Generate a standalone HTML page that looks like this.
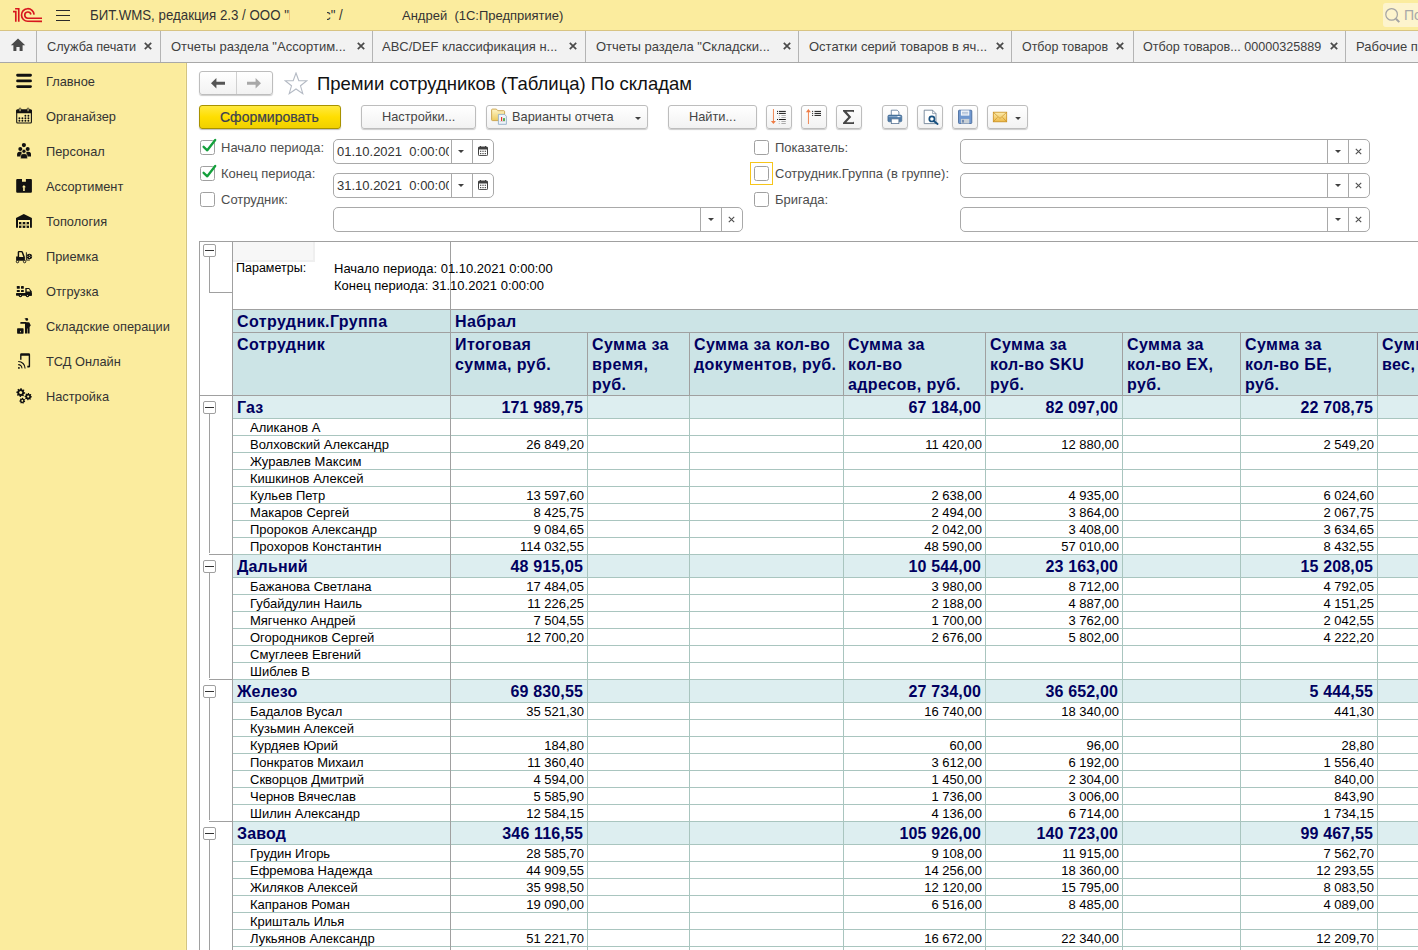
<!DOCTYPE html>
<html><head><meta charset="utf-8">
<style>
*{box-sizing:border-box;margin:0;padding:0}
html,body{width:1418px;height:950px;overflow:hidden;background:#fff;font-family:"Liberation Sans",sans-serif;color:#333}
body{position:relative}
.a{position:absolute}
.t{white-space:nowrap;position:absolute;line-height:1}
.sep{position:absolute;top:31px;width:1px;height:31px;background:#B4B4B4}
.tab{position:absolute;top:40px;font-size:13px;color:#404040;white-space:nowrap;line-height:1;transform:scaleY(1.05);transform-origin:0 11px}
.si{position:absolute;left:46px;font-size:12.8px;color:#333;white-space:nowrap;line-height:1;transform:scaleY(1.05);transform-origin:0 11px}
.btn{position:absolute;border:1px solid #BDBDBD;border-radius:3px;background:linear-gradient(#FFFFFF,#F2F2F2);box-shadow:0 1px 1px rgba(0,0,0,.20)}
.fld{position:absolute;border:1px solid #A9A9A9;border-radius:5px;background:#fff;height:25px}
.dv{position:absolute;top:0;width:1px;height:23px;background:#A9A9A9}
.cb{position:absolute;width:15px;height:15px;border:1px solid #A0A0A0;border-radius:2.5px;background:#fff}
.lbl{position:absolute;font-size:13px;color:#4D4D4D;white-space:nowrap;line-height:1;transform:scaleY(1.05);transform-origin:0 11px}
.hl{position:absolute;height:1px}
.vl{position:absolute;width:1px}
.hd{position:absolute;font-size:16px;font-weight:bold;color:#000060;letter-spacing:0.4px;line-height:20px;white-space:nowrap}
.g{position:absolute;font-size:16px;font-weight:bold;color:#000060;letter-spacing:0.15px;white-space:nowrap;line-height:1}
.n{position:absolute;font-size:13px;color:#000;white-space:nowrap;line-height:1;transform:scaleY(1.05);transform-origin:0 11px}
.sy{transform:scaleY(1.05);transform-origin:0 11px}
.r{text-align:right}
</style></head><body>

<div class="a" style="left:0;top:0;width:1418px;height:30px;background:#FBEC9E"></div>
<div class="a" style="left:0;top:30px;width:1418px;height:1px;background:#D8C483"></div>
<svg class="a" style="left:10px;top:4px" width="36" height="22" viewBox="0 0 36 22">
<g fill="none" stroke="#D7161E" stroke-width="1.65" stroke-linecap="butt">
<path d="M3 7.6 H5.8 V17.8"/>
<path d="M5.1 4.7 H8.75 V17.8"/>
<path d="M24.1 10.6 A6.3 6.3 0 1 0 17.8 17.3 H32"/>
<path d="M20.9 10.5 A3.1 3.1 0 1 0 17.8 14.2 H32"/>
</g></svg>
<div class="a" style="left:56px;top:10px;width:14px;height:1px;background:#2A2A2A"></div>
<div class="a" style="left:56px;top:15px;width:14px;height:1px;background:#2A2A2A"></div>
<div class="a" style="left:56px;top:20px;width:14px;height:1px;background:#2A2A2A"></div>
<div class="t sy" style="left:90px;top:9px;font-size:13.3px;color:#333">БИТ.WMS, редакция 2.3 / ООО "</div>
<div class="a" style="left:289px;top:10px;width:1px;height:10px;background:#F2C27A"></div>
<div class="a" style="left:327px;top:0;width:30px;height:30px;overflow:hidden"><div class="t sy" style="left:-3px;top:9px;font-size:13.3px;color:#333">с" /</div></div>
<div class="t sy" style="left:402px;top:9px;font-size:13px;color:#333">Андрей&nbsp; (1С:Предприятие)</div>
<div class="a" style="left:1383px;top:3px;width:40px;height:24px;background:#FDF4CD;border-radius:3px"></div>
<svg class="a" style="left:1383px;top:4px" width="20" height="22" viewBox="0 0 20 22"><circle cx="8.6" cy="10.4" r="5.8" fill="none" stroke="#A3A3A3" stroke-width="1.2"/><path d="M12.9 14.7 L16.3 18.1" stroke="#A3A3A3" stroke-width="2"/></svg>
<div class="t" style="left:1404px;top:8px;font-size:14px;color:#A8A8A8">По</div>
<div class="a" style="left:0;top:31px;width:1418px;height:31px;background:#F2F2F2"></div>
<div class="a" style="left:0;top:62px;width:1418px;height:1px;background:#A8A8A8"></div>
<svg class="a" style="left:10px;top:38px" width="16" height="14" viewBox="0 0 16 14"><path d="M8 0.5 L15.2 7.3 H12.6 V13 H9.6 V9 H6.4 V13 H3.4 V7.3 H0.8 Z" fill="#4A4A4A"/></svg>
<div class="sep" style="left:36px"></div>
<div class="sep" style="left:160px"></div>
<div class="sep" style="left:372px"></div>
<div class="sep" style="left:585px"></div>
<div class="sep" style="left:798px"></div>
<div class="sep" style="left:1011px"></div>
<div class="sep" style="left:1133px"></div>
<div class="sep" style="left:1345px"></div>
<div class="tab" style="left:47px;font-size:12.7px;top:41px">Служба печати</div>
<svg class="a" style="left:144px;top:42px" width="8" height="8" viewBox="0 0 8 8"><path d="M0.8 0.8 L7.2 7.2 M7.2 0.8 L0.8 7.2" stroke="#4A4A4A" stroke-width="1.7"/></svg>
<div class="tab" style="left:171px;font-size:13px;top:40px">Отчеты раздела "Ассортим...</div>
<svg class="a" style="left:357px;top:42px" width="8" height="8" viewBox="0 0 8 8"><path d="M0.8 0.8 L7.2 7.2 M7.2 0.8 L0.8 7.2" stroke="#4A4A4A" stroke-width="1.7"/></svg>
<div class="tab" style="left:382px;font-size:13px;top:40px">ABC/DEF классификация н...</div>
<svg class="a" style="left:569px;top:42px" width="8" height="8" viewBox="0 0 8 8"><path d="M0.8 0.8 L7.2 7.2 M7.2 0.8 L0.8 7.2" stroke="#4A4A4A" stroke-width="1.7"/></svg>
<div class="tab" style="left:596px;font-size:13px;top:40px">Отчеты раздела "Складски...</div>
<svg class="a" style="left:783px;top:42px" width="8" height="8" viewBox="0 0 8 8"><path d="M0.8 0.8 L7.2 7.2 M7.2 0.8 L0.8 7.2" stroke="#4A4A4A" stroke-width="1.7"/></svg>
<div class="tab" style="left:809px;font-size:13px;top:40px">Остатки серий товаров в яч...</div>
<svg class="a" style="left:996px;top:42px" width="8" height="8" viewBox="0 0 8 8"><path d="M0.8 0.8 L7.2 7.2 M7.2 0.8 L0.8 7.2" stroke="#4A4A4A" stroke-width="1.7"/></svg>
<div class="tab" style="left:1022px;font-size:12.45px;top:41px">Отбор товаров</div>
<svg class="a" style="left:1116px;top:42px" width="8" height="8" viewBox="0 0 8 8"><path d="M0.8 0.8 L7.2 7.2 M7.2 0.8 L0.8 7.2" stroke="#4A4A4A" stroke-width="1.7"/></svg>
<div class="tab" style="left:1143px;font-size:12.6px;top:41px">Отбор товаров... 00000325889</div>
<svg class="a" style="left:1330px;top:42px" width="8" height="8" viewBox="0 0 8 8"><path d="M0.8 0.8 L7.2 7.2 M7.2 0.8 L0.8 7.2" stroke="#4A4A4A" stroke-width="1.7"/></svg>
<div class="tab" style="left:1356px;font-size:13px;top:40px">Рабочие пр</div>
<div class="a" style="left:0;top:63px;width:186px;height:887px;background:#FBEC9E"></div>
<div class="a" style="left:185px;top:63px;width:1px;height:887px;background:#FDEFA2"></div>
<div class="a" style="left:186px;top:63px;width:1px;height:887px;background:#D3C482"></div>
<svg class="a" style="left:12px;top:70px" width="24" height="22" viewBox="0 0 24 22"><path d="M5.6 5.2 H18.5 M5.6 10.9 H18.5 M5.6 16.6 H18.5" stroke="#111" stroke-width="2.9" stroke-linecap="round"/></svg>
<div class="si" style="top:76px">Главное</div>
<svg class="a" style="left:12px;top:105px" width="24" height="22" viewBox="0 0 24 22"><rect x="4.7" y="5.1" width="14.7" height="12.9" rx="1" fill="none" stroke="#111" stroke-width="1.1"/><rect x="4.2" y="4.6" width="15.7" height="3.6" rx="1" fill="#111"/><rect x="7.2" y="3" width="1.7" height="3.6" rx="0.8" fill="#FBEC9E" stroke="#111" stroke-width="0.7"/><rect x="15.2" y="3" width="1.7" height="3.6" rx="0.8" fill="#FBEC9E" stroke="#111" stroke-width="0.7"/><g fill="#111"><circle cx="13.4" cy="10.7" r="0.95"/><circle cx="16.4" cy="10.7" r="0.95"/><circle cx="7.4" cy="13.3" r="0.95"/><circle cx="10.4" cy="13.3" r="0.95"/><circle cx="13.4" cy="13.3" r="0.95"/><circle cx="16.4" cy="13.3" r="0.95"/><circle cx="7.4" cy="15.8" r="0.95"/><circle cx="10.4" cy="15.8" r="0.95"/><circle cx="13.4" cy="15.8" r="0.95"/><circle cx="16.4" cy="15.8" r="0.95"/></g></svg>
<div class="si" style="top:111px">Органайзер</div>
<svg class="a" style="left:12px;top:140px" width="24" height="22" viewBox="0 0 24 22"><g fill="#111"><circle cx="11.9" cy="5.1" r="2.1"/><circle cx="8.3" cy="9.1" r="2"/><circle cx="15.7" cy="9.1" r="2"/><path d="M5.1 16.6 V14.3 Q5.1 11.8 7.6 11.8 H9.6 V16.6 Z"/><path d="M19 16.6 V14.3 Q19 11.8 16.5 11.8 H14.4 V16.6 Z"/></g><g fill="#111" stroke="#FBEC9E" stroke-width="0.55"><circle cx="11.95" cy="11.3" r="2"/><path d="M8.6 18.7 V16.1 Q8.6 13.7 11 13.7 H12.9 Q15.4 13.7 15.4 16.1 V18.7 Z"/></g></svg>
<div class="si" style="top:146px">Персонал</div>
<svg class="a" style="left:12px;top:175px" width="24" height="22" viewBox="0 0 24 22"><path d="M4.2 4.9 Q4.2 3.9 5.2 3.9 H10 V6.7 H13.9 V3.9 H18.9 Q19.9 3.9 19.9 4.9 V16.8 Q19.9 17.8 18.9 17.8 H5.2 Q4.2 17.8 4.2 16.8 Z" fill="#111"/><path d="M11.95 10.1 L13.9 12.3 H12.75 V16 H11.15 V12.3 H10 Z" fill="#FBEC9E"/></svg>
<div class="si" style="top:181px">Ассортимент</div>
<svg class="a" style="left:12px;top:210px" width="24" height="22" viewBox="0 0 24 22"><path d="M4 8.1 L11.8 3.9 L19.9 8.1 V17.8 H18 V10 H6 V17.8 H4 Z" fill="#111"/><rect x="7" y="12" width="10" height="6" fill="#111" opacity="0.22"/><g fill="#111"><rect x="7" y="12" width="2.2" height="2.1"/><rect x="10.9" y="12" width="2.2" height="2.1"/><rect x="14.8" y="12" width="2.2" height="2.1"/><rect x="7" y="15.8" width="2.2" height="2.1"/><rect x="10.9" y="15.8" width="2.2" height="2.1"/><rect x="14.8" y="15.8" width="2.2" height="2.1"/></g></svg>
<div class="si" style="top:216px">Топология</div>
<svg class="a" style="left:12px;top:245px" width="24" height="22" viewBox="0 0 24 22"><g transform="translate(0,1)"><path d="M5.7 10.5 V6.3 Q5.7 5 7 5 H9.6 Q10.6 5 11.1 6.2 L12.9 11 V14.7 H4.1 V10.5 Z" fill="#111"/><path d="M7.1 10.9 V6.3 H9.5 L11.3 10.9 Z" fill="#FBEC9E"/><circle cx="5.5" cy="15.6" r="1.2" fill="#FBEC9E" stroke="#111" stroke-width="0.9"/><circle cx="12.6" cy="15.6" r="1.2" fill="#FBEC9E" stroke="#111" stroke-width="0.9"/><rect x="13.9" y="6.3" width="0.9" height="8.2" fill="#111"/><rect x="14.8" y="13.6" width="3" height="0.9" fill="#111"/><circle cx="17.4" cy="10.5" r="2.7" fill="#111"/><g fill="#FBEC9E"><circle cx="17.4" cy="9.2" r="0.55"/><circle cx="17.4" cy="11.4" r="0.55"/><circle cx="15.8" cy="10.3" r="0.5"/><circle cx="19" cy="10.3" r="0.5"/></g></g></svg>
<div class="si" style="top:251px">Приемка</div>
<svg class="a" style="left:12px;top:280px" width="24" height="22" viewBox="0 0 24 22"><g transform="translate(0,1)"><g fill="#111"><rect x="4.8" y="5" width="3" height="2.8" rx="0.6"/><rect x="9" y="5" width="2.8" height="2.8" rx="0.6"/><rect x="4.8" y="9" width="3" height="2" rx="0.5"/><rect x="9" y="9" width="2.8" height="2" rx="0.5"/><rect x="4" y="12" width="15.8" height="2.7" rx="0.6"/><path d="M13.3 7 H17.2 L19.8 10.5 V14.7 H13.3 Z"/><circle cx="8.4" cy="14.5" r="1.8"/><circle cx="15.5" cy="14.5" r="1.8"/></g><path d="M14.7 8 H17 L18.2 10.5 H14.7 Z" fill="#FBEC9E"/><circle cx="8.4" cy="14.5" r="0.55" fill="#FBEC9E"/><circle cx="15.5" cy="14.5" r="0.55" fill="#FBEC9E"/></g></svg>
<div class="si" style="top:286px">Отгрузка</div>
<svg class="a" style="left:12px;top:315px" width="24" height="22" viewBox="0 0 24 22"><g fill="#111"><rect x="5.1" y="13.2" width="6.5" height="5.6" rx="0.7"/><circle cx="14.8" cy="4.4" r="1.35"/><path d="M12.2 3.1 L14.5 3.6 L14.2 4.4 Z"/><rect x="8.3" y="7" width="6" height="1.8" rx="0.6"/><path d="M13 7.2 H16.6 Q18 7.4 18 9 L18.8 10.2 L17.6 12 V18.6 H15.6 V13.5 H15.1 V18.6 H13 Z"/></g><ellipse cx="8.4" cy="16.5" rx="0.45" ry="0.85" fill="#FBEC9E"/></svg>
<div class="si" style="top:321px">Складские операции</div>
<svg class="a" style="left:12px;top:350px" width="24" height="22" viewBox="0 0 24 22"><g fill="#111"><path d="M8.1 9.7 V4.4 Q8.1 3.2 9.3 3.2 H16.9 Q18.1 3.2 18.1 4.4 V16.5 Q18.1 17.6 17 17.6 H15.3 V15.7 H16.7 V5.8 H9.5 V9.7 Z"/><circle cx="6.9" cy="17.9" r="0.95"/></g><g fill="none" stroke="#111" stroke-width="1.1"><path d="M6.2 14.6 A3.6 3.6 0 0 1 9.9 18.4"/><path d="M6.2 11.5 A6.8 6.8 0 0 1 13.1 18.4"/></g></svg>
<div class="si" style="top:356px">ТСД Онлайн</div>
<svg class="a" style="left:12px;top:385px" width="24" height="22" viewBox="0 0 24 22"><polygon points="8.70,3.10 9.58,3.19 10.00,4.46 10.59,4.77 11.88,4.42 12.44,5.10 11.84,6.30 12.03,6.94 13.20,7.60 13.11,8.48 11.84,8.90 11.53,9.49 11.88,10.78 11.20,11.34 10.00,10.74 9.36,10.93 8.70,12.10 7.82,12.01 7.40,10.74 6.81,10.43 5.52,10.78 4.96,10.10 5.56,8.90 5.37,8.26 4.20,7.60 4.29,6.72 5.56,6.30 5.87,5.71 5.52,4.42 6.20,3.86 7.40,4.46 8.04,4.27" fill="#111"/><circle cx="8.7" cy="7.6" r="1.5" fill="#FBEC9E"/><polygon points="16.20,7.90 16.92,7.97 17.27,9.01 17.76,9.27 18.82,8.98 19.28,9.54 18.79,10.53 18.95,11.05 19.90,11.60 19.83,12.32 18.79,12.67 18.53,13.16 18.82,14.22 18.26,14.68 17.27,14.19 16.75,14.35 16.20,15.30 15.48,15.23 15.13,14.19 14.64,13.93 13.58,14.22 13.12,13.66 13.61,12.67 13.45,12.15 12.50,11.60 12.57,10.88 13.61,10.53 13.87,10.04 13.58,8.98 14.14,8.52 15.13,9.01 15.65,8.85" fill="#111"/><circle cx="16.2" cy="11.6" r="1.1" fill="#FBEC9E"/><polygon points="10.30,12.75 10.97,12.83 11.30,13.68 11.73,13.95 12.65,13.88 13.00,14.45 12.54,15.24 12.60,15.75 13.22,16.42 13.00,17.05 12.10,17.18 11.73,17.55 11.60,18.45 10.97,18.67 10.30,18.05 9.79,17.99 9.00,18.45 8.43,18.10 8.50,17.18 8.23,16.75 7.38,16.42 7.30,15.75 8.06,15.24 8.23,14.75 7.95,13.88 8.43,13.40 9.30,13.68 9.79,13.51" fill="#111"/><circle cx="10.3" cy="15.75" r="0.9" fill="#FBEC9E"/></svg>
<div class="si" style="top:391px">Настройка</div>
<div class="btn" style="left:199px;top:71px;width:74px;height:24px"></div>
<div class="a" style="left:236px;top:72px;width:1px;height:22px;background:#D0D0D0"></div>
<svg class="a" style="left:211px;top:78px" width="14" height="11" viewBox="0 0 14 11"><path d="M0 5.25 L5.4 0 V3.7 H14 V6.8 H5.4 V10.5 Z" fill="#555"/></svg>
<svg class="a" style="left:247px;top:78px" width="14" height="11" viewBox="0 0 14 11"><path d="M14 5.25 L8.6 0 V3.7 H0 V6.8 H8.6 V10.5 Z" fill="#A8A8A8"/></svg>
<svg class="a" style="left:283.5px;top:71.5px" width="24" height="23" viewBox="0 0 24 23"><path d="M12 1 L14.8 8.6 L22.8 8.8 L16.5 13.8 L18.8 21.6 L12 17 L5.2 21.6 L7.5 13.8 L1.2 8.8 L9.2 8.6 Z" fill="none" stroke="#B4BAC4" stroke-width="1.1"/></svg>
<div class="t" style="left:317px;top:75px;font-size:18.5px;color:#111">Премии сотрудников (Таблица) По складам</div>
<div class="a" style="left:199px;top:105px;width:142px;height:24px;border:1px solid #A89200;border-radius:3px;background:linear-gradient(#FFE940,#FFDE00 50%,#F0D000);box-shadow:0 1px 1px rgba(0,0,0,.25)"></div>
<div class="t" style="left:220px;top:110px;font-size:14px;color:#3C4150;-webkit-text-stroke:0.2px #3C4150;transform:scaleY(1.05);transform-origin:0 12px">Сформировать</div>
<div class="btn" style="left:361px;top:105px;width:115px;height:24px"></div>
<div class="t sy" style="left:382px;top:111px;font-size:12.8px;color:#444">Настройки...</div>
<div class="btn" style="left:486px;top:105px;width:162px;height:24px"></div>
<svg class="a" style="left:484px;top:102px" width="26" height="26" viewBox="0 0 26 26"><defs><linearGradient id="fg" x1="0" y1="0" x2="0" y2="1"><stop offset="0" stop-color="#FFF6C8"/><stop offset="1" stop-color="#EDCB5E"/></linearGradient></defs><path d="M7.6 8 Q7.6 7.1 8.5 7.1 H12.4 L13.8 8.7 H19.8 Q20.6 8.7 20.6 9.6 V17.8 Q20.6 18.6 19.8 18.6 H8.5 Q7.6 18.6 7.6 17.8 Z" fill="url(#fg)" stroke="#C9A24A" stroke-width="0.9"/><path d="M14.4 12.4 H20.6 L22.4 14.2 V22.3 H14.4 Z" fill="#EEF4FA" stroke="#93AFC6" stroke-width="0.9"/><rect x="17" y="15" width="1.2" height="4" fill="#E8392A"/><rect x="19.1" y="16.1" width="1.8" height="2.9" fill="#45A845"/><path d="M15.8 19.4 H21" stroke="#C9B0B0" stroke-width="0.5"/></svg>
<div class="t sy" style="left:512px;top:111px;font-size:12.8px;color:#444">Варианты отчета</div>
<svg class="a" style="left:635px;top:117px" width="6" height="3" viewBox="0 0 6 3"><path d="M0 0 H6 L3 3 Z" fill="#404040"/></svg>
<div class="btn" style="left:668px;top:105px;width:89px;height:24px"></div>
<div class="t sy" style="left:689px;top:111px;font-size:12.8px;color:#444">Найти...</div>
<div class="btn" style="left:766px;top:105px;width:26px;height:24px"></div>
<div class="btn" style="left:801px;top:105px;width:26px;height:24px"></div>
<div class="btn" style="left:836px;top:105px;width:26px;height:24px"></div>
<div class="btn" style="left:882px;top:105px;width:26px;height:24px"></div>
<div class="btn" style="left:917px;top:105px;width:26px;height:24px"></div>
<div class="btn" style="left:952px;top:105px;width:26px;height:24px"></div>
<div class="btn" style="left:987px;top:105px;width:41px;height:24px"></div>
<svg class="a" style="left:762px;top:102px" width="104" height="30" viewBox="0 0 104 30">
<g fill="#EE7C44"><rect x="10.95" y="7" width="0.9" height="12.5"/><path d="M8.9 18.9 H13.9 L11.4 22 Z"/>
<rect x="45.95" y="9.5" width="0.9" height="12.5"/><path d="M43.9 10.3 H48.9 L46.4 7 Z"/></g>
<g fill="#1A1A1A"><rect x="15" y="8.9" width="1" height="1"/><rect x="16.9" y="8.9" width="6.9" height="1"/><rect x="15" y="10.9" width="1" height="1"/><rect x="16.9" y="10.9" width="6.9" height="1"/><rect x="15" y="17" width="1" height="1"/><rect x="16.9" y="17" width="6.9" height="1"/>
<rect x="50.1" y="8.9" width="1" height="1"/><rect x="52.5" y="8.9" width="6.5" height="1"/><rect x="50.1" y="10.9" width="1" height="1"/><rect x="52.5" y="10.9" width="6.5" height="1"/><rect x="50.1" y="12.9" width="1" height="1"/><rect x="52.5" y="12.9" width="6.5" height="1"/></g>
<g fill="#9A9A9A"><rect x="16.8" y="13" width="0.8" height="0.8"/><rect x="19.4" y="13" width="4.4" height="0.8"/><rect x="16.8" y="15" width="0.8" height="0.8"/><rect x="19.4" y="15" width="4.4" height="0.8"/><rect x="16.8" y="19" width="0.8" height="0.8"/><rect x="19.4" y="19" width="4.4" height="0.8"/><rect x="16.8" y="21" width="0.8" height="0.8"/><rect x="19.4" y="21" width="4.4" height="0.8"/></g>
<path d="M81 8 H92 V10.6 L91.2 9.8 H84.6 L89.2 15 L84.4 20.3 H91.2 L92 19.5 V22 H81 V20.8 L86.3 15 L81 9.2 Z" fill="#454545"/>
</svg>
<svg class="a" style="left:878px;top:102px" width="104" height="30" viewBox="0 0 104 30">
<path d="M13.3 8.2 H19.2 L20.9 9.9 V13.6 H13.3 Z" fill="#fff" stroke="#5A7595" stroke-width="0.8"/>
<rect x="9.9" y="13.1" width="13.9" height="6.7" rx="1.3" fill="#4F7BA8" stroke="#385F88" stroke-width="0.6"/>
<rect x="10.6" y="14.3" width="12.5" height="0.8" fill="#9DB8D6"/>
<rect x="19.5" y="14.1" width="2.2" height="1" fill="#fff"/>
<rect x="13.3" y="16.9" width="7.6" height="4.7" fill="#fff" stroke="#5A7595" stroke-width="0.8"/>
<path d="M46.2 8.2 H54.6 L58 11.6 V21.6 H46.2 Z" fill="#fff" stroke="#61758C" stroke-width="0.8"/>
<path d="M54.6 8.2 V11.6 H58" fill="none" stroke="#61758C" stroke-width="0.6"/>
<circle cx="53.9" cy="16.9" r="2.6" fill="#fff" stroke="#17507F" stroke-width="1.7"/>
<path d="M55.8 18.9 L59.6 22" stroke="#17507F" stroke-width="1.9" stroke-linecap="round"/>
<rect x="80.5" y="8.2" width="13.3" height="13.3" rx="0.8" fill="#6F97CF" stroke="#3E6296" stroke-width="0.8"/>
<rect x="82.9" y="8.4" width="8.4" height="5.2" fill="#F4F7FB"/>
<rect x="84" y="9.9" width="6.2" height="0.6" fill="#7D98BD"/><rect x="84" y="11.6" width="6.2" height="0.6" fill="#7D98BD"/>
<rect x="82.9" y="16.9" width="8.4" height="4.6" fill="#C9D0D6"/>
<rect x="84.4" y="17.8" width="1.2" height="2.8" fill="#3E6296"/>
</svg>
<svg class="a" style="left:982px;top:102px" width="52" height="30" viewBox="0 0 52 30"><defs><linearGradient id="mg" x1="0" y1="0" x2="0" y2="1"><stop offset="0" stop-color="#FCEDB0"/><stop offset="1" stop-color="#EDB947"/></linearGradient></defs>
<rect x="11.3" y="10.2" width="13.4" height="9.6" fill="url(#mg)" stroke="#C98E1C" stroke-width="0.8"/>
<path d="M11.8 10.8 L18 16.4 L24.2 10.8 M11.8 19.3 L15.6 15.2 M24.2 19.3 L20.4 15.2" fill="none" stroke="#CC9428" stroke-width="0.7"/>
<path d="M33.2 14.9 H38.9 L36.05 18 Z" fill="#404040"/></svg>
<div class="cb" style="left:200px;top:140px"></div>
<svg class="a" style="left:200px;top:138px" width="18" height="18" viewBox="0 0 18 18"><path d="M3.6 8.8 L7.3 12.3 L15.2 2" fill="none" stroke="#14A03C" stroke-width="2.3" stroke-linecap="round" stroke-linejoin="round"/></svg>
<div class="cb" style="left:200px;top:166px"></div>
<svg class="a" style="left:200px;top:164px" width="18" height="18" viewBox="0 0 18 18"><path d="M3.6 8.8 L7.3 12.3 L15.2 2" fill="none" stroke="#14A03C" stroke-width="2.3" stroke-linecap="round" stroke-linejoin="round"/></svg>
<div class="cb" style="left:200px;top:192px"></div>
<div class="lbl" style="left:221px;top:141px">Начало периода:</div>
<div class="lbl" style="left:221px;top:167px">Конец периода:</div>
<div class="lbl" style="left:221px;top:193px">Сотрудник:</div>
<div class="fld" style="left:333px;top:139px;width:161px;overflow:hidden">
<div class="t sy" style="left:3px;top:5px;font-size:13px;color:#333;width:112px;overflow:hidden">01.10.2021&nbsp; 0:00:00</div>
<div class="dv" style="left:117px"></div><div class="dv" style="left:138px"></div></div>
<svg class="a" style="left:458px;top:150px" width="6" height="3" viewBox="0 0 6 3"><path d="M0 0 H6 L3 3 Z" fill="#404040"/></svg>
<svg class="a" style="left:478px;top:146px" width="10" height="10" viewBox="0 0 10 10"><rect x="0.5" y="1" width="9" height="8.6" rx="0.8" fill="#fff" stroke="#404040" stroke-width="1"/><rect x="0.5" y="1" width="9" height="2.5" fill="#404040"/><rect x="2" y="0" width="1" height="1.5" fill="#404040"/><rect x="7" y="0" width="1" height="1.5" fill="#404040"/><g fill="#505050"><rect x="2" y="4.7" width="1.3" height="1.2"/><rect x="4.35" y="4.7" width="1.3" height="1.2"/><rect x="6.7" y="4.7" width="1.3" height="1.2"/><rect x="2" y="7" width="1.3" height="1.2"/><rect x="4.35" y="7" width="1.3" height="1.2"/><rect x="6.7" y="7" width="1.3" height="1.2"/></g></svg>
<div class="fld" style="left:333px;top:173px;width:161px;overflow:hidden">
<div class="t sy" style="left:3px;top:5px;font-size:13px;color:#333;width:112px;overflow:hidden">31.10.2021&nbsp; 0:00:00</div>
<div class="dv" style="left:117px"></div><div class="dv" style="left:138px"></div></div>
<svg class="a" style="left:458px;top:184px" width="6" height="3" viewBox="0 0 6 3"><path d="M0 0 H6 L3 3 Z" fill="#404040"/></svg>
<svg class="a" style="left:478px;top:180px" width="10" height="10" viewBox="0 0 10 10"><rect x="0.5" y="1" width="9" height="8.6" rx="0.8" fill="#fff" stroke="#404040" stroke-width="1"/><rect x="0.5" y="1" width="9" height="2.5" fill="#404040"/><rect x="2" y="0" width="1" height="1.5" fill="#404040"/><rect x="7" y="0" width="1" height="1.5" fill="#404040"/><g fill="#505050"><rect x="2" y="4.7" width="1.3" height="1.2"/><rect x="4.35" y="4.7" width="1.3" height="1.2"/><rect x="6.7" y="4.7" width="1.3" height="1.2"/><rect x="2" y="7" width="1.3" height="1.2"/><rect x="4.35" y="7" width="1.3" height="1.2"/><rect x="6.7" y="7" width="1.3" height="1.2"/></g></svg>
<div class="fld" style="left:333px;top:207px;width:410px"><div class="dv" style="left:366px"></div><div class="dv" style="left:387px"></div></div>
<svg class="a" style="left:708px;top:218px" width="6" height="3" viewBox="0 0 6 3"><path d="M0 0 H6 L3 3 Z" fill="#404040"/></svg>
<svg class="a" style="left:728px;top:216px" width="7" height="7" viewBox="0 0 7 7"><path d="M0.8 0.8 L6.2 6.2 M6.2 0.8 L0.8 6.2" stroke="#505050" stroke-width="1.15"/></svg>
<div class="cb" style="left:754px;top:140px"></div>
<div class="cb" style="left:754px;top:166px"></div>
<div class="cb" style="left:754px;top:192px"></div>
<div class="a" style="left:750px;top:162px;width:23px;height:23px;border:1px solid #F6C51A"></div>
<div class="lbl" style="left:775px;top:141px">Показатель:</div>
<div class="lbl" style="left:775px;top:167px">Сотрудник.Группа (в группе):</div>
<div class="lbl" style="left:775px;top:193px">Бригада:</div>
<div class="fld" style="left:960px;top:139px;width:410px"><div class="dv" style="left:366px"></div><div class="dv" style="left:387px"></div></div>
<svg class="a" style="left:1335px;top:150px" width="6" height="3" viewBox="0 0 6 3"><path d="M0 0 H6 L3 3 Z" fill="#404040"/></svg>
<svg class="a" style="left:1355px;top:148px" width="7" height="7" viewBox="0 0 7 7"><path d="M0.8 0.8 L6.2 6.2 M6.2 0.8 L0.8 6.2" stroke="#505050" stroke-width="1.15"/></svg>
<div class="fld" style="left:960px;top:173px;width:410px"><div class="dv" style="left:366px"></div><div class="dv" style="left:387px"></div></div>
<svg class="a" style="left:1335px;top:184px" width="6" height="3" viewBox="0 0 6 3"><path d="M0 0 H6 L3 3 Z" fill="#404040"/></svg>
<svg class="a" style="left:1355px;top:182px" width="7" height="7" viewBox="0 0 7 7"><path d="M0.8 0.8 L6.2 6.2 M6.2 0.8 L0.8 6.2" stroke="#505050" stroke-width="1.15"/></svg>
<div class="fld" style="left:960px;top:207px;width:410px"><div class="dv" style="left:366px"></div><div class="dv" style="left:387px"></div></div>
<svg class="a" style="left:1335px;top:218px" width="6" height="3" viewBox="0 0 6 3"><path d="M0 0 H6 L3 3 Z" fill="#404040"/></svg>
<svg class="a" style="left:1355px;top:216px" width="7" height="7" viewBox="0 0 7 7"><path d="M0.8 0.8 L6.2 6.2 M6.2 0.8 L0.8 6.2" stroke="#505050" stroke-width="1.15"/></svg>
<div class="hl" style="left:199px;top:241px;width:1219px;background:#A0A0A0"></div>
<div class="vl" style="left:199px;top:241px;height:709px;background:#A0A0A0"></div>
<div class="vl" style="left:232px;top:241px;height:709px;background:#A0A0A0"></div>
<div class="a" style="left:233px;top:242px;width:82px;height:20px;background:#F7F7F7;border-right:2px solid #EFEFEF;border-bottom:2px solid #EFEFEF"></div>
<div class="vl" style="left:450px;top:242px;height:67px;background:#A0A0A0"></div>
<div class="t sy" style="left:236px;top:262px;font-size:12.5px;color:#000">Параметры:</div>
<div class="t sy" style="left:334px;top:262px;font-size:13px;color:#000">Начало периода: 01.10.2021 0:00:00</div>
<div class="t sy" style="left:334px;top:279px;font-size:13px;color:#000">Конец периода: 31.10.2021 0:00:00</div>
<div class="a" style="left:203px;top:244px;width:13px;height:13px;border:1px solid #A0A0A0;border-radius:2px;background:#fff"></div>
<div class="a" style="left:205px;top:250px;width:9px;height:1px;background:#333"></div>
<div class="vl" style="left:209px;top:257px;height:36px;background:#A0A0A0"></div>
<div class="hl" style="left:209px;top:292px;width:23px;background:#A0A0A0"></div>
<div class="a" style="left:233px;top:310px;width:1185px;height:85px;background:#CCE4E6"></div>
<div class="hl" style="left:232px;top:309px;width:1186px;background:#A0A0A0"></div>
<div class="hl" style="left:232px;top:332px;width:1186px;background:#A0A0A0"></div>
<div class="hl" style="left:199px;top:395px;width:1219px;background:#A0A0A0"></div>
<div class="vl" style="left:450px;top:309px;height:86px;background:#A0A0A0"></div>
<div class="vl" style="left:587px;top:332px;height:63px;background:#A0A0A0"></div>
<div class="vl" style="left:689px;top:332px;height:63px;background:#A0A0A0"></div>
<div class="vl" style="left:843px;top:332px;height:63px;background:#A0A0A0"></div>
<div class="vl" style="left:985px;top:332px;height:63px;background:#A0A0A0"></div>
<div class="vl" style="left:1122px;top:332px;height:63px;background:#A0A0A0"></div>
<div class="vl" style="left:1240px;top:332px;height:63px;background:#A0A0A0"></div>
<div class="vl" style="left:1377px;top:332px;height:63px;background:#A0A0A0"></div>
<div class="hd" style="left:237px;top:312px">Сотрудник.Группа</div>
<div class="hd" style="left:455px;top:312px">Набрал</div>
<div class="hd" style="left:237px;top:335px">Сотрудник</div>
<div class="hd" style="left:455px;top:335px">Итоговая<br>сумма, руб.</div>
<div class="hd" style="left:592px;top:335px">Сумма за<br>время,<br>руб.</div>
<div class="hd" style="left:694px;top:335px">Сумма за кол-во<br>документов, руб.</div>
<div class="hd" style="left:848px;top:335px">Сумма за<br>кол-во<br>адресов, руб.</div>
<div class="hd" style="left:990px;top:335px">Сумма за<br>кол-во SKU<br>руб.</div>
<div class="hd" style="left:1127px;top:335px">Сумма за<br>кол-во ЕХ,<br>руб.</div>
<div class="hd" style="left:1245px;top:335px">Сумма за<br>кол-во БЕ,<br>руб.</div>
<div class="hd" style="left:1382px;top:335px">Сумма за<br>вес, руб.</div>
<div class="a" style="left:233px;top:396px;width:1185px;height:22px;background:#DDEEF0"></div>
<div class="g" style="left:237px;top:400px">Газ</div>
<div class="g r" style="left:450px;width:133px;top:400px">171 989,75</div>
<div class="g r" style="left:843px;width:138px;top:400px">67 184,00</div>
<div class="g r" style="left:985px;width:133px;top:400px">82 097,00</div>
<div class="g r" style="left:1240px;width:133px;top:400px">22 708,75</div>
<div class="hl" style="left:233px;top:418px;width:1185px;background:#A9C5BF"></div>
<div class="a" style="left:203px;top:401px;width:13px;height:13px;border:1px solid #A0A0A0;border-radius:2px;background:#fff"></div>
<div class="a" style="left:205px;top:407px;width:9px;height:1px;background:#333"></div>
<div class="n" style="left:250px;top:421px">Аликанов А</div>
<div class="hl" style="left:233px;top:435px;width:1185px;background:#A9C5BF"></div>
<div class="n" style="left:250px;top:438px">Волховский Александр</div>
<div class="n r" style="left:450px;width:134px;top:438px">26 849,20</div>
<div class="n r" style="left:843px;width:139px;top:438px">11 420,00</div>
<div class="n r" style="left:985px;width:134px;top:438px">12 880,00</div>
<div class="n r" style="left:1240px;width:134px;top:438px">2 549,20</div>
<div class="hl" style="left:233px;top:452px;width:1185px;background:#A9C5BF"></div>
<div class="n" style="left:250px;top:455px">Журавлев Максим</div>
<div class="hl" style="left:233px;top:469px;width:1185px;background:#A9C5BF"></div>
<div class="n" style="left:250px;top:472px">Кишкинов Алексей</div>
<div class="hl" style="left:233px;top:486px;width:1185px;background:#A9C5BF"></div>
<div class="n" style="left:250px;top:489px">Кульев Петр</div>
<div class="n r" style="left:450px;width:134px;top:489px">13 597,60</div>
<div class="n r" style="left:843px;width:139px;top:489px">2 638,00</div>
<div class="n r" style="left:985px;width:134px;top:489px">4 935,00</div>
<div class="n r" style="left:1240px;width:134px;top:489px">6 024,60</div>
<div class="hl" style="left:233px;top:503px;width:1185px;background:#A9C5BF"></div>
<div class="n" style="left:250px;top:506px">Макаров Сергей</div>
<div class="n r" style="left:450px;width:134px;top:506px">8 425,75</div>
<div class="n r" style="left:843px;width:139px;top:506px">2 494,00</div>
<div class="n r" style="left:985px;width:134px;top:506px">3 864,00</div>
<div class="n r" style="left:1240px;width:134px;top:506px">2 067,75</div>
<div class="hl" style="left:233px;top:520px;width:1185px;background:#A9C5BF"></div>
<div class="n" style="left:250px;top:523px">Пророков Александр</div>
<div class="n r" style="left:450px;width:134px;top:523px">9 084,65</div>
<div class="n r" style="left:843px;width:139px;top:523px">2 042,00</div>
<div class="n r" style="left:985px;width:134px;top:523px">3 408,00</div>
<div class="n r" style="left:1240px;width:134px;top:523px">3 634,65</div>
<div class="hl" style="left:233px;top:537px;width:1185px;background:#A9C5BF"></div>
<div class="n" style="left:250px;top:540px">Прохоров Константин</div>
<div class="n r" style="left:450px;width:134px;top:540px">114 032,55</div>
<div class="n r" style="left:843px;width:139px;top:540px">48 590,00</div>
<div class="n r" style="left:985px;width:134px;top:540px">57 010,00</div>
<div class="n r" style="left:1240px;width:134px;top:540px">8 432,55</div>
<div class="hl" style="left:233px;top:554px;width:1185px;background:#A9C5BF"></div>
<div class="vl" style="left:209px;top:414px;height:139px;background:#A0A0A0"></div>
<div class="hl" style="left:209px;top:554px;width:23px;background:#A0A0A0"></div>
<div class="a" style="left:233px;top:555px;width:1185px;height:22px;background:#DDEEF0"></div>
<div class="g" style="left:237px;top:559px">Дальний</div>
<div class="g r" style="left:450px;width:133px;top:559px">48 915,05</div>
<div class="g r" style="left:843px;width:138px;top:559px">10 544,00</div>
<div class="g r" style="left:985px;width:133px;top:559px">23 163,00</div>
<div class="g r" style="left:1240px;width:133px;top:559px">15 208,05</div>
<div class="hl" style="left:233px;top:577px;width:1185px;background:#A9C5BF"></div>
<div class="a" style="left:203px;top:560px;width:13px;height:13px;border:1px solid #A0A0A0;border-radius:2px;background:#fff"></div>
<div class="a" style="left:205px;top:566px;width:9px;height:1px;background:#333"></div>
<div class="n" style="left:250px;top:580px">Бажанова Светлана</div>
<div class="n r" style="left:450px;width:134px;top:580px">17 484,05</div>
<div class="n r" style="left:843px;width:139px;top:580px">3 980,00</div>
<div class="n r" style="left:985px;width:134px;top:580px">8 712,00</div>
<div class="n r" style="left:1240px;width:134px;top:580px">4 792,05</div>
<div class="hl" style="left:233px;top:594px;width:1185px;background:#A9C5BF"></div>
<div class="n" style="left:250px;top:597px">Губайдулин Наиль</div>
<div class="n r" style="left:450px;width:134px;top:597px">11 226,25</div>
<div class="n r" style="left:843px;width:139px;top:597px">2 188,00</div>
<div class="n r" style="left:985px;width:134px;top:597px">4 887,00</div>
<div class="n r" style="left:1240px;width:134px;top:597px">4 151,25</div>
<div class="hl" style="left:233px;top:611px;width:1185px;background:#A9C5BF"></div>
<div class="n" style="left:250px;top:614px">Мягченко Андрей</div>
<div class="n r" style="left:450px;width:134px;top:614px">7 504,55</div>
<div class="n r" style="left:843px;width:139px;top:614px">1 700,00</div>
<div class="n r" style="left:985px;width:134px;top:614px">3 762,00</div>
<div class="n r" style="left:1240px;width:134px;top:614px">2 042,55</div>
<div class="hl" style="left:233px;top:628px;width:1185px;background:#A9C5BF"></div>
<div class="n" style="left:250px;top:631px">Огородников Сергей</div>
<div class="n r" style="left:450px;width:134px;top:631px">12 700,20</div>
<div class="n r" style="left:843px;width:139px;top:631px">2 676,00</div>
<div class="n r" style="left:985px;width:134px;top:631px">5 802,00</div>
<div class="n r" style="left:1240px;width:134px;top:631px">4 222,20</div>
<div class="hl" style="left:233px;top:645px;width:1185px;background:#A9C5BF"></div>
<div class="n" style="left:250px;top:648px">Смуглеев Евгений</div>
<div class="hl" style="left:233px;top:662px;width:1185px;background:#A9C5BF"></div>
<div class="n" style="left:250px;top:665px">Шиблев В</div>
<div class="hl" style="left:233px;top:679px;width:1185px;background:#A9C5BF"></div>
<div class="vl" style="left:209px;top:573px;height:105px;background:#A0A0A0"></div>
<div class="hl" style="left:209px;top:679px;width:23px;background:#A0A0A0"></div>
<div class="a" style="left:233px;top:680px;width:1185px;height:22px;background:#DDEEF0"></div>
<div class="g" style="left:237px;top:684px">Железо</div>
<div class="g r" style="left:450px;width:133px;top:684px">69 830,55</div>
<div class="g r" style="left:843px;width:138px;top:684px">27 734,00</div>
<div class="g r" style="left:985px;width:133px;top:684px">36 652,00</div>
<div class="g r" style="left:1240px;width:133px;top:684px">5 444,55</div>
<div class="hl" style="left:233px;top:702px;width:1185px;background:#A9C5BF"></div>
<div class="a" style="left:203px;top:685px;width:13px;height:13px;border:1px solid #A0A0A0;border-radius:2px;background:#fff"></div>
<div class="a" style="left:205px;top:691px;width:9px;height:1px;background:#333"></div>
<div class="n" style="left:250px;top:705px">Бадалов Вусал</div>
<div class="n r" style="left:450px;width:134px;top:705px">35 521,30</div>
<div class="n r" style="left:843px;width:139px;top:705px">16 740,00</div>
<div class="n r" style="left:985px;width:134px;top:705px">18 340,00</div>
<div class="n r" style="left:1240px;width:134px;top:705px">441,30</div>
<div class="hl" style="left:233px;top:719px;width:1185px;background:#A9C5BF"></div>
<div class="n" style="left:250px;top:722px">Кузьмин Алексей</div>
<div class="hl" style="left:233px;top:736px;width:1185px;background:#A9C5BF"></div>
<div class="n" style="left:250px;top:739px">Курдяев Юрий</div>
<div class="n r" style="left:450px;width:134px;top:739px">184,80</div>
<div class="n r" style="left:843px;width:139px;top:739px">60,00</div>
<div class="n r" style="left:985px;width:134px;top:739px">96,00</div>
<div class="n r" style="left:1240px;width:134px;top:739px">28,80</div>
<div class="hl" style="left:233px;top:753px;width:1185px;background:#A9C5BF"></div>
<div class="n" style="left:250px;top:756px">Понкратов Михаил</div>
<div class="n r" style="left:450px;width:134px;top:756px">11 360,40</div>
<div class="n r" style="left:843px;width:139px;top:756px">3 612,00</div>
<div class="n r" style="left:985px;width:134px;top:756px">6 192,00</div>
<div class="n r" style="left:1240px;width:134px;top:756px">1 556,40</div>
<div class="hl" style="left:233px;top:770px;width:1185px;background:#A9C5BF"></div>
<div class="n" style="left:250px;top:773px">Скворцов Дмитрий</div>
<div class="n r" style="left:450px;width:134px;top:773px">4 594,00</div>
<div class="n r" style="left:843px;width:139px;top:773px">1 450,00</div>
<div class="n r" style="left:985px;width:134px;top:773px">2 304,00</div>
<div class="n r" style="left:1240px;width:134px;top:773px">840,00</div>
<div class="hl" style="left:233px;top:787px;width:1185px;background:#A9C5BF"></div>
<div class="n" style="left:250px;top:790px">Чернов Вячеслав</div>
<div class="n r" style="left:450px;width:134px;top:790px">5 585,90</div>
<div class="n r" style="left:843px;width:139px;top:790px">1 736,00</div>
<div class="n r" style="left:985px;width:134px;top:790px">3 006,00</div>
<div class="n r" style="left:1240px;width:134px;top:790px">843,90</div>
<div class="hl" style="left:233px;top:804px;width:1185px;background:#A9C5BF"></div>
<div class="n" style="left:250px;top:807px">Шилин Александр</div>
<div class="n r" style="left:450px;width:134px;top:807px">12 584,15</div>
<div class="n r" style="left:843px;width:139px;top:807px">4 136,00</div>
<div class="n r" style="left:985px;width:134px;top:807px">6 714,00</div>
<div class="n r" style="left:1240px;width:134px;top:807px">1 734,15</div>
<div class="hl" style="left:233px;top:821px;width:1185px;background:#A9C5BF"></div>
<div class="vl" style="left:209px;top:698px;height:122px;background:#A0A0A0"></div>
<div class="hl" style="left:209px;top:821px;width:23px;background:#A0A0A0"></div>
<div class="a" style="left:233px;top:822px;width:1185px;height:22px;background:#DDEEF0"></div>
<div class="g" style="left:237px;top:826px">Завод</div>
<div class="g r" style="left:450px;width:133px;top:826px">346 116,55</div>
<div class="g r" style="left:843px;width:138px;top:826px">105 926,00</div>
<div class="g r" style="left:985px;width:133px;top:826px">140 723,00</div>
<div class="g r" style="left:1240px;width:133px;top:826px">99 467,55</div>
<div class="hl" style="left:233px;top:844px;width:1185px;background:#A9C5BF"></div>
<div class="a" style="left:203px;top:827px;width:13px;height:13px;border:1px solid #A0A0A0;border-radius:2px;background:#fff"></div>
<div class="a" style="left:205px;top:833px;width:9px;height:1px;background:#333"></div>
<div class="n" style="left:250px;top:847px">Грудин Игорь</div>
<div class="n r" style="left:450px;width:134px;top:847px">28 585,70</div>
<div class="n r" style="left:843px;width:139px;top:847px">9 108,00</div>
<div class="n r" style="left:985px;width:134px;top:847px">11 915,00</div>
<div class="n r" style="left:1240px;width:134px;top:847px">7 562,70</div>
<div class="hl" style="left:233px;top:861px;width:1185px;background:#A9C5BF"></div>
<div class="n" style="left:250px;top:864px">Ефремова Надежда</div>
<div class="n r" style="left:450px;width:134px;top:864px">44 909,55</div>
<div class="n r" style="left:843px;width:139px;top:864px">14 256,00</div>
<div class="n r" style="left:985px;width:134px;top:864px">18 360,00</div>
<div class="n r" style="left:1240px;width:134px;top:864px">12 293,55</div>
<div class="hl" style="left:233px;top:878px;width:1185px;background:#A9C5BF"></div>
<div class="n" style="left:250px;top:881px">Жиляков Алексей</div>
<div class="n r" style="left:450px;width:134px;top:881px">35 998,50</div>
<div class="n r" style="left:843px;width:139px;top:881px">12 120,00</div>
<div class="n r" style="left:985px;width:134px;top:881px">15 795,00</div>
<div class="n r" style="left:1240px;width:134px;top:881px">8 083,50</div>
<div class="hl" style="left:233px;top:895px;width:1185px;background:#A9C5BF"></div>
<div class="n" style="left:250px;top:898px">Капранов Роман</div>
<div class="n r" style="left:450px;width:134px;top:898px">19 090,00</div>
<div class="n r" style="left:843px;width:139px;top:898px">6 516,00</div>
<div class="n r" style="left:985px;width:134px;top:898px">8 485,00</div>
<div class="n r" style="left:1240px;width:134px;top:898px">4 089,00</div>
<div class="hl" style="left:233px;top:912px;width:1185px;background:#A9C5BF"></div>
<div class="n" style="left:250px;top:915px">Криштaль Илья</div>
<div class="hl" style="left:233px;top:929px;width:1185px;background:#A9C5BF"></div>
<div class="n" style="left:250px;top:932px">Лукьянов Александр</div>
<div class="n r" style="left:450px;width:134px;top:932px">51 221,70</div>
<div class="n r" style="left:843px;width:139px;top:932px">16 672,00</div>
<div class="n r" style="left:985px;width:134px;top:932px">22 340,00</div>
<div class="n r" style="left:1240px;width:134px;top:932px">12 209,70</div>
<div class="hl" style="left:233px;top:946px;width:1185px;background:#A9C5BF"></div>
<div class="vl" style="left:209px;top:840px;height:110px;background:#A0A0A0"></div>
<div class="vl" style="left:587px;top:396px;height:554px;background:#A9C5BF"></div>
<div class="vl" style="left:689px;top:396px;height:554px;background:#A9C5BF"></div>
<div class="vl" style="left:843px;top:396px;height:554px;background:#A9C5BF"></div>
<div class="vl" style="left:985px;top:396px;height:554px;background:#A9C5BF"></div>
<div class="vl" style="left:1122px;top:396px;height:554px;background:#A9C5BF"></div>
<div class="vl" style="left:1240px;top:396px;height:554px;background:#A9C5BF"></div>
<div class="vl" style="left:1377px;top:396px;height:554px;background:#A9C5BF"></div>
<div class="vl" style="left:450px;top:396px;height:554px;background:#A0A0A0"></div>
</body></html>
